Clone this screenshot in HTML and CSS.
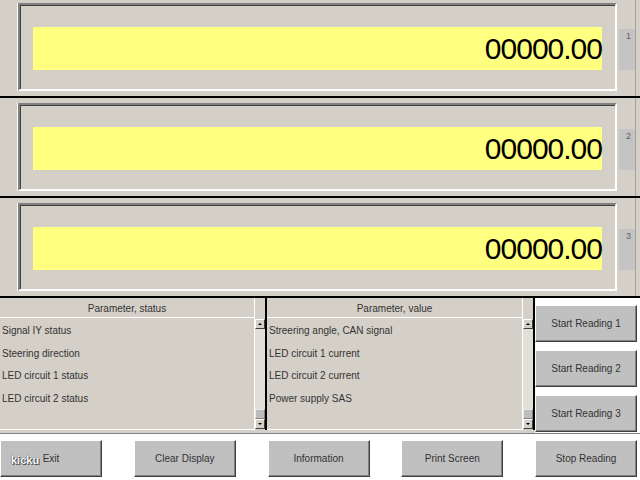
FILE: index.html
```html
<!DOCTYPE html>
<html>
<head>
<meta charset="utf-8">
<link rel="stylesheet" href="styles.css">
</head>
<body>
<div class="panels">
  <div class="panel">
    <div class="frame"><div class="display">00000.00</div></div>
    <div class="tab">1</div>
    <div class="edge"></div>
  </div>
  <div class="panel">
    <div class="frame"><div class="display">00000.00</div></div>
    <div class="tab">2</div>
    <div class="edge"></div>
  </div>
  <div class="panel">
    <div class="frame"><div class="display">00000.00</div></div>
    <div class="tab">3</div>
    <div class="edge"></div>
  </div>
</div>
<div class="lower">
  <div class="list list-a">
    <div class="list-main">
      <div class="list-head">Parameter, status</div>
      <div class="rows">
        <div class="row">Signal IY status</div>
        <div class="row">Steering direction</div>
        <div class="row">LED circuit 1 status</div>
        <div class="row">LED circuit 2 status</div>
      </div>
    </div>
    <div class="scroll">
      <div class="scroll-top"></div>
      <div class="arrow up"></div>
      <div class="track"></div>
      <div class="thumb"></div>
      <div class="arrow down"></div>
    </div>
  </div>
  <div class="list list-b">
    <div class="list-main">
      <div class="list-head">Parameter, value</div>
      <div class="rows">
        <div class="row">Streering angle, CAN signal</div>
        <div class="row">LED circuit 1 current</div>
        <div class="row">LED circuit 2 current</div>
        <div class="row">Power supply SAS</div>
      </div>
    </div>
    <div class="scroll">
      <div class="scroll-top"></div>
      <div class="arrow up"></div>
      <div class="track"></div>
      <div class="thumb"></div>
      <div class="arrow down"></div>
    </div>
  </div>
  <div class="side">
    <button class="btn">Start Reading 1</button>
    <button class="btn">Start Reading 2</button>
    <button class="btn">Start Reading 3</button>
  </div>
</div>
<div class="bottom">
  <button class="btn">Exit</button>
  <button class="btn">Clear Display</button>
  <button class="btn">Information</button>
  <button class="btn">Print Screen</button>
  <button class="btn">Stop Reading</button>
  <span class="watermark">kicku</span>
</div>
</body>
</html>
```
FILE: styles.css
```css
html, body {
  margin: 0;
  padding: 0;
}
body {
  width: 640px;
  height: 480px;
  overflow: hidden;
  background: #ffffff;
  font-family: "Liberation Sans", Arial, sans-serif;
}

.panels {
  margin-top: -2px;
  background: #d4d0c8;
}
.panel {
  height: 100px;
  box-sizing: border-box;
  border-bottom: 2px solid #000;
  display: flex;
  align-items: flex-start;
  padding: 5px 0 0 18px;
}
.frame {
  width: 599px;
  height: 88px;
  box-sizing: border-box;
  border: 2px solid;
  border-color: #808080 #ffffff #ffffff #808080;
  box-shadow: inset 1px 1px 0 #404040, -1px 0 0 #ffffff;
  padding: 22px 13px 0 13px;
}
.display {
  height: 43px;
  background: #ffff80;
  display: flex;
  align-items: center;
  justify-content: flex-end;
  font-size: 30px;
  letter-spacing: -1px;
  line-height: 1;
  color: #000;
}
.tab {
  margin: 26px 0 0 2px;
  width: 16px;
  height: 41px;
  box-sizing: border-box;
  background: #c4c4c4;
  font-size: 9px;
  color: #606060;
  padding: 3px 0 0 7px;
  line-height: 9px;
}
.edge {
  width: 1px;
  align-self: stretch;
  margin-top: -5px;
  background: #a4a19a;
}

.lower {
  display: flex;
  height: 136px;
  box-sizing: border-box;
  border-bottom: 1px solid #808080;
  background: #d4d0c8;
}
.list {
  display: flex;
  height: 132px;
  box-sizing: border-box;
  border-right: 2px solid #000;
}
.list-a { width: 267px; }
.list-b { width: 268px; }
.list-main {
  flex: 1;
  display: flex;
  flex-direction: column;
  border-bottom: 1px solid #ffffff;
}
.list-head {
  height: 19px;
  border-bottom: 1px solid #ffffff;
  text-align: center;
  font-size: 10px;
  line-height: 21px;
  color: #333;
}
.rows {
  padding-top: 2px;
}
.row {
  height: 22.5px;
  line-height: 22.5px;
  font-size: 10px;
  padding-left: 2px;
  color: #333;
  white-space: nowrap;
}

.scroll {
  width: 11px;
  box-sizing: border-box;
  border-left: 1px solid #ffffff;
  display: flex;
  flex-direction: column;
}
.scroll-top {
  height: 21px;
}
.arrow {
  height: 10px;
  box-sizing: border-box;
  background: #d4d0c8;
  border: 1px solid;
  border-color: #ffffff #404040 #404040 #ffffff;
  display: flex;
  align-items: center;
  justify-content: center;
}
.arrow::after {
  content: "";
  width: 0;
  height: 0;
  border-left: 2px solid transparent;
  border-right: 2px solid transparent;
}
.arrow.up::after { border-bottom: 2px solid #000; }
.arrow.down::after { border-top: 2px solid #000; }
.arrow.down { margin-bottom: 1px; }
.track {
  flex: 1;
  background: #e2dfd8;
}
.thumb {
  height: 10px;
  box-sizing: border-box;
  background: #bdbdbd;
  border: 1px solid;
  border-color: #e8e8e8 #808080 #808080 #e8e8e8;
}

.side {
  flex: 1;
  background: #ffffff;
  display: flex;
  flex-direction: column;
  gap: 8px;
  padding: 7px 3px 0 0;
}

.btn {
  width: 102px;
  height: 37px;
  box-sizing: border-box;
  margin: 0;
  padding: 0;
  background: #c0c0c0;
  border: 1px solid;
  border-color: #ffffff #404040 #404040 #ffffff;
  box-shadow: inset -1px -1px 0 #808080;
  font-family: "Liberation Sans", Arial, sans-serif;
  font-size: 10px;
  color: #333;
  display: flex;
  align-items: center;
  justify-content: center;
}

.bottom {
  position: relative;
  display: flex;
  justify-content: space-between;
  padding: 6px 3px 0 0;
  background: #ffffff;
}
.watermark {
  position: absolute;
  left: 11px;
  top: 20px;
  font-size: 11px;
  font-weight: bold;
  line-height: 12px;
  color: #ffffff;
  text-shadow: 0 0 1px #000, 1px 1px 0 #555;
}
```
